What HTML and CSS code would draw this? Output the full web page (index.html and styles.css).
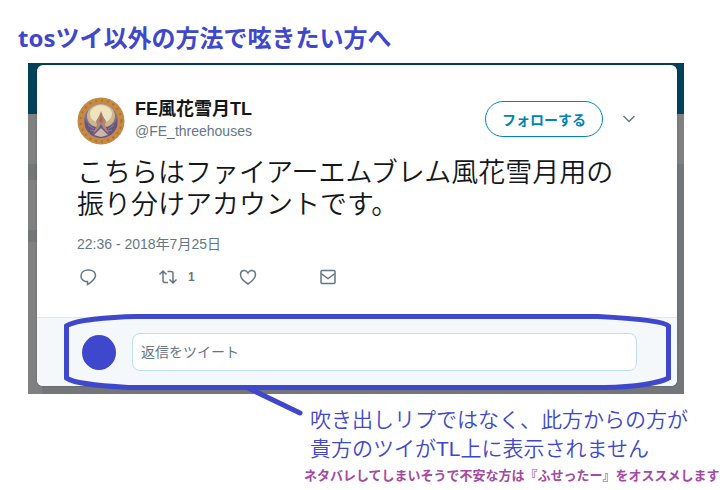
FILE: index.html
```html
<!DOCTYPE html>
<html lang="ja">
<head>
<meta charset="utf-8">
<meta name="viewport" content="width=device-width, initial-scale=1">
<title>FE風花雪月TL</title>
<link rel="stylesheet" href="styles.css">
</head>
<body>
<h1 class="heading">tosツイ以外の方法で呟きたい方へ</h1>
<main class="stage">
  <article class="card">
    <div class="tweet">
      <header class="author">
        <svg class="avatar" viewBox="0 0 48 48" aria-hidden="true">
          <circle cx="24" cy="24" r="23.5" fill="#b98a62"/>
          <circle cx="24" cy="24" r="20.5" fill="none" stroke="#c98a3c" stroke-width="5"/>
          <circle cx="24" cy="24" r="20.5" fill="none" stroke="#a8703f" stroke-width="2" stroke-dasharray="2 4"/>
          <circle cx="24" cy="24" r="17" fill="#85708a"/>
          <ellipse cx="24" cy="19" rx="14" ry="12" fill="#cdb68c"/>
          <ellipse cx="24" cy="17" rx="11" ry="9" fill="#eee3bf"/>
          <path d="M8 21Q10 29 19 30L24 27 29 30Q38 29 40 21L40 30Q36 40 24 41 12 40 8 30Z" fill="#67557c"/>
          <path d="M11 28l6 4M13 33l5 1M37 28l-6 4M35 33l-5 1" fill="none" stroke="#8f7f9c" stroke-width="1"/>
          <path d="M24 14l2 5 3 5-1 4 4 9-6-6-2-4-2 4-6 6 4-9-1-4 3-5z" fill="#b08478"/>
          <path d="M24 16l-2 8 2 2 2-2z" fill="#a06c50"/>
          <path d="M17 38L24 31 31 38 24 40Z" fill="#c9b6ac"/>
        </svg>
        <div class="identity">
          <strong class="name">FE風花雪月TL</strong>
          <a class="handle" href="#">@FE_threehouses</a>
        </div>
        <div class="controls">
          <button class="follow" type="button">フォローする</button>
          <button class="icon-button" type="button" aria-label="その他">
            <svg width="14" height="10" viewBox="0 0 14 10"><path d="M1.500 2L7 7.500 12.500 2"/></svg>
          </button>
        </div>
      </header>
      <p class="message">こちらはファイアーエムブレム風花雪月用の<br>振り分けアカウントです。</p>
      <time class="date" datetime="2018-07-25T22:36">22:36 - 2018年7月25日</time>
      <div class="actions">
        <button class="icon-button" type="button" aria-label="返信">
          <svg width="20" height="18" viewBox="0 0 20 18"><path d="M7.500 13.500C4.500 12.500 3 10.500 3 8C3 4.500 6 2 10.500 2C15 2 17.500 4.500 17.500 7.500C17.500 11.500 13.500 14 9.500 16.500V13.500Z"/></svg>
        </button>
        <button class="icon-button" type="button" aria-label="リツイート">
          <svg width="20" height="18" viewBox="0 0 20 18"><path d="M1.500 6.500L5 3L8.500 6.500M5 3.500V12.500Q5 14.500 7 14.500H10M9.500 3.500H13Q15 3.500 15 5.500V14.500M11.500 11.500L15 15L18.500 11.500"/></svg>
          <span class="count">1</span>
        </button>
        <button class="icon-button" type="button" aria-label="いいね">
          <svg width="20" height="18" viewBox="0 0 20 18"><path d="M10 16C6 13.500 2.500 10 2.500 6.500C2.500 2 8 1 10 5C12 1 17.500 2 17.500 6.500C17.500 10 14 13.500 10 16Z"/></svg>
        </button>
        <button class="icon-button" type="button" aria-label="メッセージ">
          <svg width="20" height="18" viewBox="0 0 20 18"><rect x="3" y="2.500" width="14" height="13" rx="1"/><path d="M3 5.500L10 10.500L17 5.500"/></svg>
        </button>
      </div>
    </div>
    <form class="reply">
      <span class="dot"></span>
      <input class="reply-box" type="text" placeholder="返信をツイート" aria-label="返信をツイート">
    </form>
  </article>
  <svg class="outline" viewBox="0 0 656 110" preserveAspectRatio="none" aria-hidden="true">
    <path d="M38.500 12C46 6 80 3 109 2.500H570C600 4 636 7 640.500 12V64C632 69 606 73 577 73.500H100C76 72 46 70 38.500 64Z"/>
    <path d="M220 74L272 99" stroke-linecap="round"/>
  </svg>
</main>
<footer class="notes">
  <p class="note">吹き出しリプではなく、此方からの方が<br>貴方のツイがTL上に表示されません</p>
  <p class="hint">ネタバレしてしまいそうで不安な方は『ふせったー』をオススメします</p>
</footer>
</body>
</html>
```
FILE: styles.css
```css
* {
  box-sizing: border-box;
}

body {
  margin: 0;
  background: #fff;
  color: #14171a;
  font-family: "Liberation Sans", "Noto Sans CJK JP", sans-serif;
}

p,
h1 {
  margin: 0;
}

.heading {
  padding: 20px 18px 7px;
  color: #3f48cc;
  font: bold 24px/36px "Noto Sans", "Noto Sans CJK JP", sans-serif;
}

/* dimmed timeline behind the dialog */
.stage {
  position: relative;
  margin: 0 42px 0 28px;
  padding: 2px 7px 8px 9px;
  background:
    linear-gradient(#00425a 51px, #808080 51px 101px, #73777a 101px 117px, #808080 117px 167px, #73777a 167px 179px, #808080 179px) left / 14px 100% no-repeat,
    linear-gradient(#00425a 51px, #808080 51px 101px, #73777a 101px);
}

.card {
  overflow: hidden;
  border-radius: 6px;
  background: #fff;
  box-shadow: 0 0 2px rgba(0, 0, 0, 0.3);
}

.tweet {
  padding: 32px 40px 31px;
}

.author {
  display: flex;
  align-items: flex-start;
}

.avatar {
  width: 48px;
  height: 48px;
  margin-right: 10px;
}

.identity {
  display: flex;
  flex: 1;
  flex-direction: column;
}

.name {
  font-size: 18px;
  line-height: 24px;
}

.handle {
  color: #657786;
  font-size: 14px;
  line-height: 20px;
  text-decoration: none;
}

.controls {
  display: flex;
  align-items: center;
  gap: 19px;
  padding: 4px 1px 0 0;
}

.follow {
  width: 118px;
  height: 36px;
  padding: 0;
  border: 1px solid #0084b4;
  border-radius: 18px;
  background: #fff;
  color: #0084b4;
  font: bold 14px/20px "Noto Sans CJK JP", sans-serif;
}

.icon-button {
  display: flex;
  align-items: center;
  padding: 0;
  border: 0;
  background: none;
  color: #657786;
}

.icon-button svg {
  fill: none;
  stroke: currentColor;
  stroke-width: 1.5;
}

.message {
  margin-top: 12px;
  font-size: 27px;
  font-weight: 350;
  line-height: 32px;
  white-space: nowrap;
}

.date {
  display: block;
  margin-top: 13px;
  color: #657786;
  font-size: 14px;
  line-height: 20px;
}

.actions {
  display: grid;
  grid-template-columns: repeat(4, 80px);
  height: 18px;
  margin-top: 14px;
  padding-left: 1px;
}

.count {
  margin-left: 10px;
  font: bold 12px/18px "Liberation Sans", sans-serif;
}

.reply {
  display: flex;
  align-items: center;
  gap: 16px;
  padding: 15px 40px 15px 45px;
  border-top: 1px solid #e1e8ed;
  background: #f5f8fa;
}

.dot {
  flex: none;
  width: 34px;
  height: 35px;
  border-radius: 50%;
  background: #3f48cc;
}

.reply-box {
  flex: 1;
  min-width: 0;
  height: 38px;
  padding: 0 8px;
  border: 1px solid #bfdfec;
  border-radius: 8px;
  background: #fff;
  font: 14px/20px "Liberation Sans", "Noto Sans CJK JP", sans-serif;
}

.reply-box::placeholder {
  color: #657786;
  opacity: 1;
}

/* marker stroke drawn over the reply area */
.outline {
  position: absolute;
  bottom: -30px;
  left: 0;
  width: 100%;
  height: 110px;
  fill: none;
  stroke: #3f48cc;
  stroke-width: 5;
  pointer-events: none;
}

.notes {
  padding: 11px 0 0 304px;
  white-space: nowrap;
}

.note {
  padding-left: 6px;
  color: #3f48cc;
  font-size: 21px;
  font-weight: 350;
  line-height: 29px;
}

.hint {
  margin-top: 4px;
  color: #a349a4;
  font-size: 13px;
  font-weight: bold;
  line-height: 18px;
}
```
